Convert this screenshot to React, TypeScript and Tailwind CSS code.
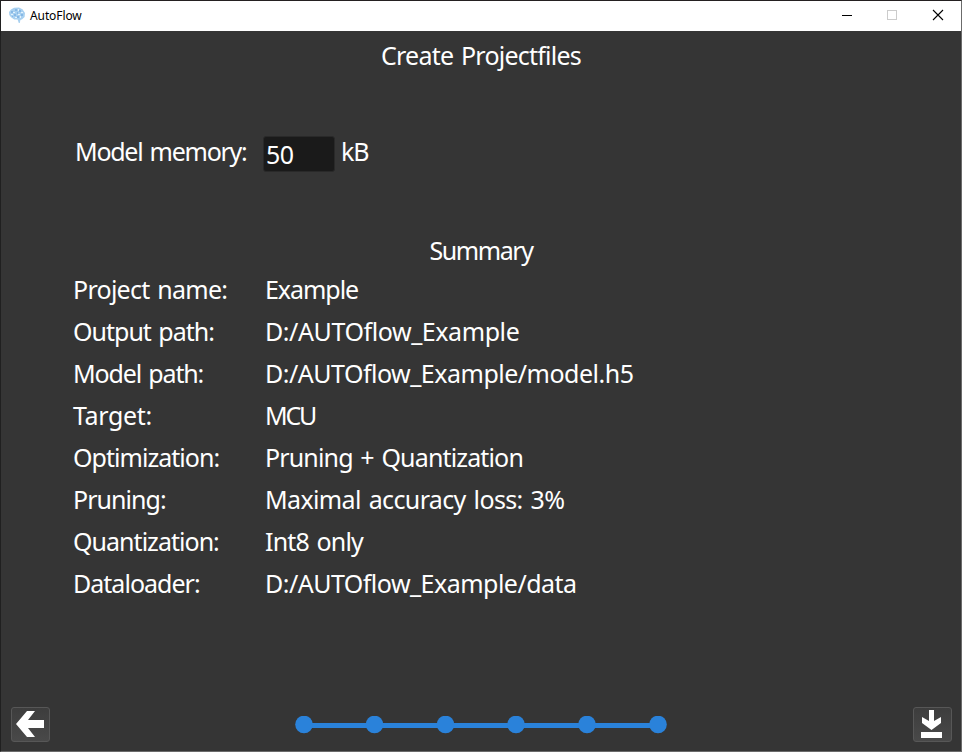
import React from "react";

const rows = [
  { label: "Project name:", value: "Example", l: "tracking-[-0.73px]", v: "tracking-[-1.05px]" },
  { label: "Output path:", value: "D:/AUTOflow_Example", l: "tracking-[-1px]", v: "tracking-[-0.42px]" },
  { label: "Model path:", value: "D:/AUTOflow_Example/model.h5", l: "tracking-[-1.15px]", v: "tracking-[-0.5px]" },
  { label: "Target:", value: "MCU", l: "tracking-[-0.35px]", v: "tracking-[-2.2px]" },
  { label: "Optimization:", value: "Pruning + Quantization", l: "tracking-[-0.97px]", v: "tracking-[-0.85px]" },
  { label: "Pruning:", value: "Maximal accuracy loss: 3%", l: "tracking-[-0.95px]", v: "tracking-[-0.63px]" },
  { label: "Quantization:", value: "Int8 only", l: "tracking-[-0.97px]", v: "tracking-[-0.85px]" },
  { label: "Dataloader:", value: "D:/AUTOflow_Example/data", l: "tracking-[-0.98px]", v: "tracking-[-0.52px]" },
];

function BrainIcon() {
  return (
    <svg width="16" height="17" viewBox="0 0 16 17">
      <path d="M2 2.5 5 .8 10 .6l3.5 1.6L16 6l-.4 4-2.4 2.2-1.8.8-.6 3h-1l-1.2-3.4-3.4-.2L2 10.2.3 8 0 5z" fill="#a8d0f0" />
      <path d="M2 4h2v2H2zM6 2h2v2H6zM10 3h2v2h-2zM5 7h2v2H5zM12 7h2v2h-2zM8 9h2v2H8zM3 9h1v1H3zM8 5h1v2H8z" fill="#86b8e6" />
      <path d="M4 5h2v1H4zM9 2h1v2H9zM9 7h2v1H9zM2 7h2v1H2zM12 5h2v1h-2zM6 10h2v1H6zM11 9h1v2h-1z" fill="#e4f2fc" />
    </svg>
  );
}

export default function App() {
  return (
    <div className="flex h-[752px] w-[962px] flex-col overflow-hidden border border-[#6b6b6b] border-l-[#202020] border-t-[#242021] bg-[#353535] font-['Noto_Sans','Liberation_Sans',sans-serif] text-white">
      <header className="flex h-[30px] shrink-0 items-center bg-white text-black">
        <div className="ml-2 mt-[-2px]"><BrainIcon /></div>
        <span className="ml-[5px] text-[12px] leading-[30px] tracking-[-0.1px]">AutoFlow</span>
        <div className="ml-auto flex">
          <svg width="137" height="30" viewBox="0 0 137 30" fill="none" shapeRendering="crispEdges">
            <path d="M18 14.5h10" stroke="#000" />
            <path d="M63.5 9.5h9v9h-9z" stroke="#ccc" />
            <path d="m109 9 10 10m0-10-10 10" stroke="#000" strokeWidth="1.1" shapeRendering="auto" />
          </svg>
        </div>
      </header>

      <main className="flex min-h-0 flex-1 flex-col text-[25px] leading-[42px] [word-spacing:2px]">
        <h1 className="mt-[3px] h-[42px] text-center tracking-[-0.77px]">Create Projectfiles</h1>

        <div className="ml-[74px] mt-[54px] flex h-[42px] items-start">
          <label htmlFor="memory" className="w-[188px] whitespace-nowrap tracking-[-1.27px]">Model memory:</label>
          <input
            id="memory"
            defaultValue="50"
            className="mt-[6px] h-[36px] w-[72px] rounded-[3px] border border-[#292929] bg-[#1a1a1a] px-[2px] text-[25px] leading-[34px] tracking-[-0.5px] outline-none"
          />
          <span className="ml-[6px] tracking-[-1px]">kB</span>
        </div>

        <h2 className="mt-[57px] h-[42px] text-center tracking-[-1.4px]">Summary</h2>

        <dl className="ml-[72px] mt-[-3px]">
          {rows.map((r) => (
            <div key={r.label} className="flex h-[42px] whitespace-nowrap">
              <dt className={`w-[192px] ${r.l}`}>{r.label}</dt>
              <dd className={r.v}>{r.value}</dd>
            </div>
          ))}
        </dl>

        <footer className="mt-auto flex items-center justify-between pb-[9px] pl-[10px] pr-[9px]">
          <button aria-label="Back" className="h-[35px] w-[39px] rounded-[3px] border border-[#575757] bg-linear-to-b from-[#3d3d3d] to-[#494949]">
            <svg width="37" height="33" viewBox="0 0 37 33">
              <path d="M4 16 15 3h8l-7 9h16v8H16l7 9h-8z" fill="#fff" />
            </svg>
          </button>
          <svg className="-ml-px" width="374" height="18" viewBox="0 0 374 18" fill="#2a82da">
            <path d="M10 7h354v5H10z" />
            {[10, 80.5, 151.5, 222, 293, 364].map((x) => <circle key={x} cx={x} cy="8.5" r="8.8" />)}
          </svg>
          <button aria-label="Download" className="h-[35px] w-[39px] rounded-[3px] border border-[#575757] bg-linear-to-b from-[#3d3d3d] to-[#494949]">
            <svg width="37" height="33" viewBox="0 0 37 33">
              <path d="M15 2h5v11l7-4v6l-9.5 7L8 15V9l7 4zM7 24h21v6H7z" fill="#fff" />
            </svg>
          </button>
        </footer>
      </main>
    </div>
  );
}
